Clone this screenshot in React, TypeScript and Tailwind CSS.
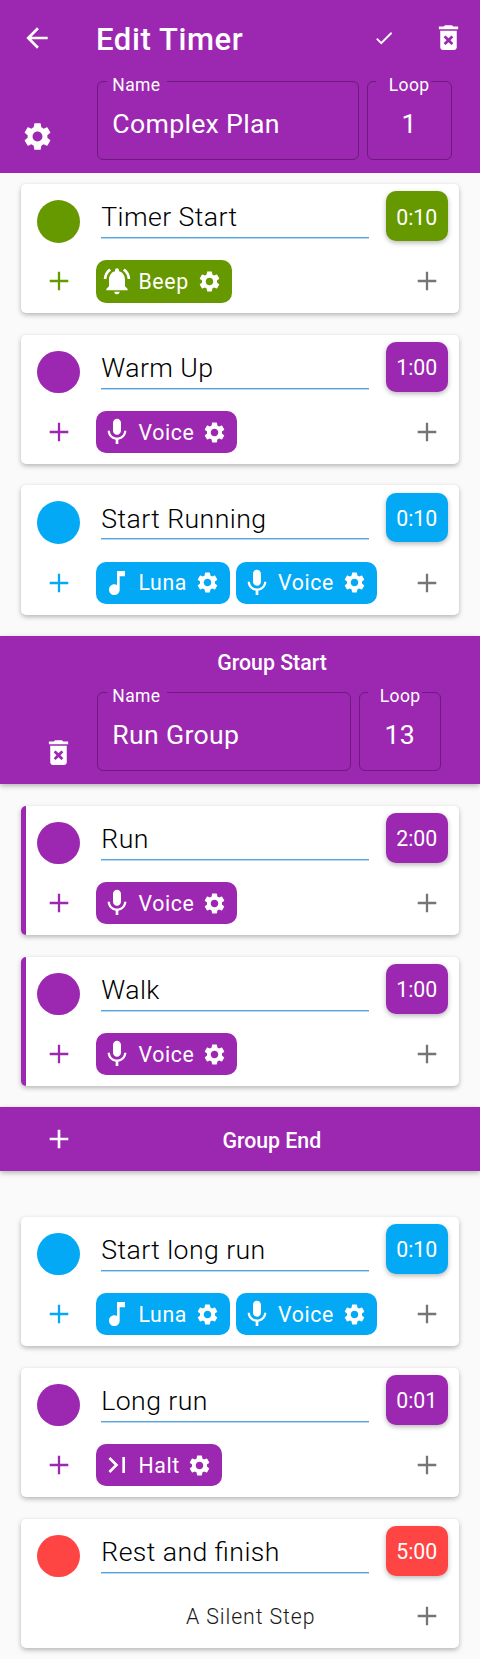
import React from "react";
import {
  MdAdd,
  MdArrowBack,
  MdCheck,
  MdDeleteForever,
  MdLastPage,
  MdMic,
  MdMusicNote,
  MdNotificationsActive,
  MdSettings,
} from "react-icons/md";

type Tone = "green" | "purple" | "blue" | "red";
type ChipKind = "Beep" | "Voice" | "Luna" | "Halt";

const toneBg: Record<Tone, string> = {
  green: "bg-[#669900]",
  purple: "bg-[#9c27b0]",
  blue: "bg-[#03a9f4]",
  red: "bg-[#ff4444]",
};

const toneText: Record<Tone, string> = {
  green: "text-[#669900]",
  purple: "text-[#9c27b0]",
  blue: "text-[#03a9f4]",
  red: "text-[#ff4444]",
};

const chips = {
  Beep: { Icon: MdNotificationsActive, width: "w-[136px]" },
  Voice: { Icon: MdMic, width: "w-[141px]" },
  Luna: { Icon: MdMusicNote, width: "w-[133.6px]" },
  Halt: { Icon: MdLastPage, width: "w-[126.4px]" },
};

function Plus({ className }: { className: string }) {
  return (
    <svg viewBox="0 0 32 32" className={`size-8 shrink-0 ${className}`} stroke="currentColor" strokeWidth="2.3">
      <path d="M6.7 16h18.6M16 6.7v18.6" />
    </svg>
  );
}

function Chip({ kind, tone }: { kind: ChipKind; tone: Tone }) {
  const { Icon, width } = chips[kind];
  return (
    <div className={`flex h-[42.4px] shrink-0 items-center rounded-[10px] pl-[5px] pr-[10px] text-white ${width} ${toneBg[tone]}`}>
      <Icon className="size-8 shrink-0" />
      <span className="ml-[5.5px] mt-px text-[21.3px] leading-[28px] tracking-[0.6px]">{kind}</span>
      <MdSettings className="ml-auto size-[25px] shrink-0" />
    </div>
  );
}

interface StepProps {
  title: string;
  time: string;
  tone: Tone;
  items?: ChipKind[];
  grouped?: boolean;
  className: string;
}

function Step({ title, time, tone, items, grouped, className }: StepProps) {
  return (
    <section
      className={`relative ml-[21px] w-[438px] overflow-hidden rounded-[5px] bg-white ${className}`}
    >
      {grouped && <div className="absolute inset-y-0 left-0 w-[5.4px] bg-[#9c27b0]" />}
      <div className="flex h-[76.3px] items-start">
        <div className={`ml-[16.3px] mt-4 size-[42.6px] shrink-0 rounded-full ${toneBg[tone]}`} />
        <div className="ml-[21.4px] h-[54px] w-[267.7px] border-b border-[#55a3dc] pt-[17.4px] text-[26.67px] font-light leading-[32px] tracking-[0.42px] text-black shadow-[0_1px_0_#b9d9f3] [font-feature-settings:'liga'_1]">
          {title}
        </div>
        <div
          className={`ml-[16.6px] mt-[7.4px] flex h-[49.6px] w-[62.4px] items-center justify-center rounded-[10px] pt-[3px] text-[21.3px] text-white shadow-[0_2px_5px_rgba(0,0,0,0.28)] ${toneBg[tone]}`}
        >
          {time}
        </div>
      </div>
      <div className="flex h-[42.4px] items-center">
        {items ? (
          <>
            <Plus className={`ml-[21.7px] mr-[21.3px] ${toneText[tone]}`} />
            <div className="flex gap-[6px]">
              {items.map((kind) => (
                <Chip key={kind} kind={kind} tone={tone} />
              ))}
            </div>
          </>
        ) : (
          <span className="ml-[165px] mt-[2px] text-[21.3px] font-light leading-[28px] tracking-[0.9px] text-[#1a1a1a]">A Silent Step</span>
        )}
        <Plus className="ml-auto mr-4 text-[#757575]" />
      </div>
    </section>
  );
}

function Field({ label, value, className, labelClass, valueClass }: {
  label: string;
  value: string;
  className: string;
  labelClass: string;
  valueClass: string;
}) {
  return (
    <div className={`relative h-[79px] shrink-0 rounded-[6px] border border-[#6c1a7b] ${className}`}>
      <span className={`absolute top-[-8px] bg-[#9c27b0] text-[17.5px] leading-[22px] tracking-[0.4px] ${labelClass}`}>
        {label}
      </span>
      <div className={`pt-[26px] text-[26.67px] leading-[32px] tracking-[0.3px] ${valueClass}`}>{value}</div>
    </div>
  );
}

const cardShadow = "h-[129.4px] shadow-[0_2px_5px_rgba(0,0,0,0.28)]";

export default function App() {
  return (
    <main className="h-[1659px] w-[480px] overflow-hidden bg-[#fafafa] font-['Roboto',sans-serif] text-white">
      <header className="h-[173px] bg-[#9c27b0]">
        <div className="flex h-[75px] items-center">
          <MdArrowBack className="ml-[21px] size-8" />
          <h1 className="ml-[43px] mt-[4px] text-[31px] font-medium leading-[40px] tracking-[0.6px]">Edit Timer</h1>
          <MdCheck className="ml-auto mr-[37px] size-[22px]" />
          <MdDeleteForever className="mr-[15px] size-[33px]" />
        </div>
        <div className="flex pt-[6px]">
          <MdSettings className="ml-[21px] mt-[38.5px] size-[33px] shrink-0" />
          <Field label="Name" value="Complex Plan" className="ml-[43.3px] w-[261.4px]" labelClass="left-[9px] w-[60px] pl-[5px]" valueClass="pl-[14px]" />
          <Field label="Loop" value="1" className="ml-[8px] w-[85px]" labelClass="left-[8px] w-[55px] pl-[13px]" valueClass="text-center" />
        </div>
      </header>

      <Step title="Timer Start" time="0:10" tone="green" items={["Beep"]} className={`mt-[11px] ${cardShadow}`} />
      <Step title="Warm Up" time="1:00" tone="purple" items={["Voice"]} className={`mt-[21.3px] ${cardShadow}`} />
      <Step title="Start Running" time="0:10" tone="blue" items={["Luna", "Voice"]} className={`mt-[21.3px] ${cardShadow}`} />

      <section className="mt-[21.2px] h-[148px] bg-[#9c27b0] shadow-[0_2px_5px_rgba(0,0,0,0.28)]">
        <h2 className="ml-[64px] pt-[12px] text-center text-[21.3px] font-medium leading-[30px]">Group Start</h2>
        <div className="flex pt-[14px]">
          <MdDeleteForever className="ml-[42px] mt-[44px] size-[33px] shrink-0" />
          <Field label="Name" value="Run Group" className="ml-[22.3px] w-[253.4px]" labelClass="left-[9px] w-[60px] pl-[5px]" valueClass="pl-[14px]" />
          <Field label="Loop" value="13" className="ml-[8px] w-[82px]" labelClass="left-[8px] w-[54px] pl-[12px]" valueClass="text-center" />
        </div>
      </section>

      <Step title="Run" time="2:00" tone="purple" items={["Voice"]} grouped className={`mt-[21.8px] ${cardShadow}`} />
      <Step title="Walk" time="1:00" tone="purple" items={["Voice"]} grouped className={`mt-[21.5px] ${cardShadow}`} />

      <section className="mt-[21.2px] flex h-[63.7px] items-center bg-[#9c27b0] shadow-[0_2px_5px_rgba(0,0,0,0.28)]">
        <MdAdd className="ml-[42.6px] size-8" />
        <h2 className="mr-[11px] mt-[3px] flex-1 text-center text-[21.3px] font-medium">Group End</h2>
      </section>

      <Step title="Start long run" time="0:10" tone="blue" items={["Luna", "Voice"]} className={`mt-[45.8px] ${cardShadow}`} />
      <Step title="Long run" time="0:01" tone="purple" items={["Halt"]} className={`mt-[21.6px] ${cardShadow}`} />
      <Step title="Rest and finish" time="5:00" tone="red" className={`mt-[21.5px] ${cardShadow}`} />
    </main>
  );
}
